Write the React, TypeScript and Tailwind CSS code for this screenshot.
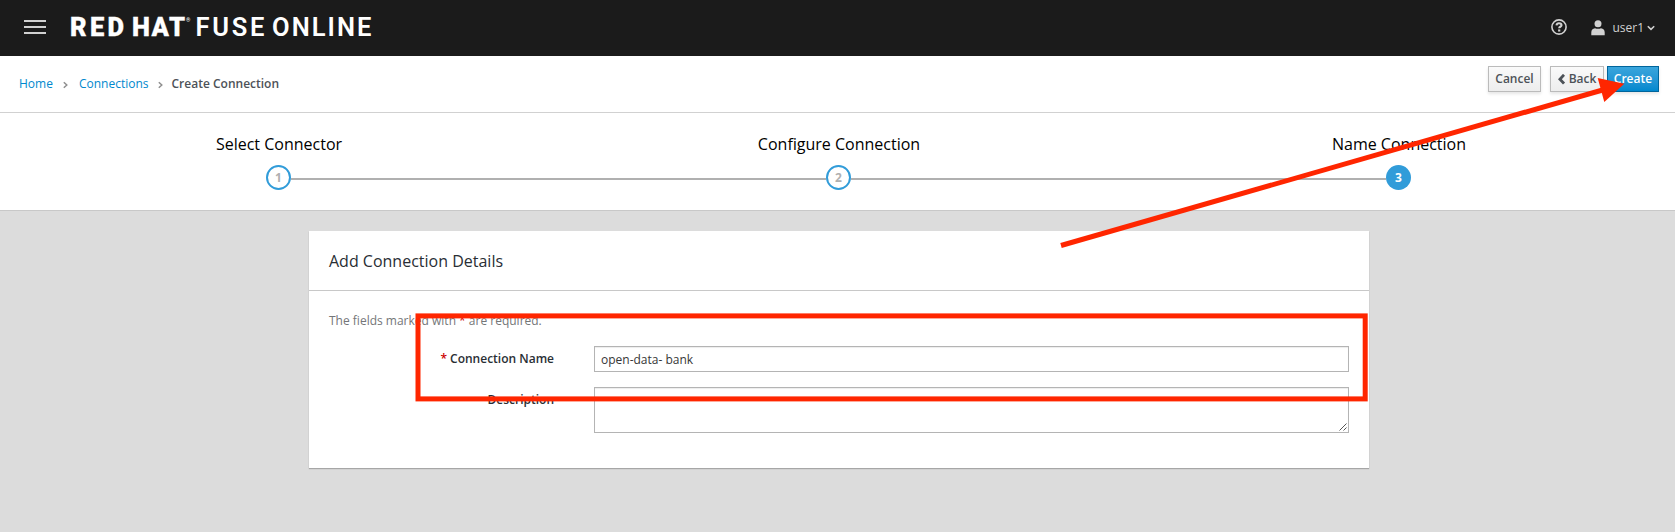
import React from 'react';

const steps = [
  { n: 1, title: 'Select Connector' },
  { n: 2, title: 'Configure Connection' },
  { n: 3, title: 'Name Connection' },
];

function Header() {
  return (
    <header className="flex h-14 items-center bg-[#1b1b1b] text-[#d1d1d1]">
      <button aria-label="Toggle navigation" className="mb-[2px] ml-6 flex w-[22px] flex-col gap-[4px]">
        <span className="h-[2px] bg-[#d1d1d1]" />
        <span className="h-[2px] bg-[#d1d1d1]" />
        <span className="h-[2px] bg-[#d1d1d1]" />
      </button>
      <svg className="ml-6" width="304" height="32" viewBox="70 12 304 32" fill="#fff" fontFamily="Roboto, sans-serif">
        <text x="70" y="35.500" fontSize="25.500" fontWeight="900" textLength="54" stroke="#fff" strokeWidth="0.3">RED</text>
        <text x="132" y="35.500" fontSize="25.500" fontWeight="900" textLength="53" stroke="#fff" strokeWidth="0.3">HAT</text>
        <text x="186" y="21.500" fontSize="5.500">®</text>
        <text x="195.500" y="35.500" fontSize="25.500" fontWeight="600" textLength="69">FUSE</text>
        <text x="272" y="35.500" fontSize="25.500" fontWeight="600" textLength="99.500">ONLINE</text>
      </svg>
      <div className="mb-[2px] ml-auto flex items-center pr-[20px]">
        <svg width="16" height="16" viewBox="0 0 16 16" fill="none" stroke="#d1d1d1">
          <circle cx="8" cy="8" r="7.100" strokeWidth="1.600" />
          <path d="M5.500 6.300C5.700 4.800 6.700 4.300 8 4.300c1.500 0 2.500.8 2.500 1.900 0 1.600-2.300 1.500-2.300 3" strokeWidth="2.100" />
          <path d="M7.100 11.500h2.200" strokeWidth="2.100" />
        </svg>
        <svg className="mt-[2px] ml-6" width="14" height="16" viewBox="0 0 14 16" fill="#d1d1d1">
          <circle cx="7" cy="3.700" r="3.500" />
          <path d="M.3 15.200v-2.700C.3 9.800 1.700 8.600 4 8.200c1.900.7 4.100.7 6 0 2.300.4 3.700 1.600 3.700 4.300v2.700z" />
        </svg>
        <span className="mt-[2px] ml-[7px] text-xs">user1</span>
        <svg className="mt-[2px] ml-[3px]" width="8" height="6" viewBox="0 0 8 6" fill="none" stroke="#d1d1d1" strokeWidth="1.600">
          <path d="M.8 1.200 4 4.300 7.200 1.200" />
        </svg>
      </div>
    </header>
  );
}

function Separator() {
  return (
    <svg width="5" height="8" viewBox="0 0 5 8" fill="none" stroke="#8f8f8f" strokeWidth="1.500" className="mt-px">
      <path d="M.8 1.200 3.800 4 .8 6.800" />
    </svg>
  );
}

function Toolbar() {
  const plain =
    'h-[26px] border border-[#bbb] bg-linear-to-b from-[#fafafa] to-[#ededed] text-[#4d5258] shadow-[0_2px_3px_rgba(3,3,3,0.1)]';
  return (
    <div className="flex h-[57px] justify-between border-b border-[#d1d1d1] bg-white text-xs">
      <nav className="flex h-14 items-center pl-[19px] text-[#0088ce]">
        <a>Home</a>
        <span className="mx-[10px]"><Separator /></span>
        <a className="ml-px">Connections</a>
        <span className="mx-[9px]"><Separator /></span>
        <span className="font-semibold text-[#4d5258]">Create Connection</span>
      </nav>
      <div className="flex pt-[10px] pr-4 font-semibold">
        <button className={plain + ' w-[53px]'}>Cancel</button>
        <button className={plain + ' ml-[9px] flex w-[54px] items-center justify-center gap-1'}>
          <svg width="7" height="11" viewBox="0 0 7 11" fill="none" stroke="#4d5258" strokeWidth="2.800">
            <path d="M6 .8 1.900 5.200 6 9.600" />
          </svg>
          Back
        </button>
        <button className="ml-[3px] h-[26px] w-[52px] border border-[#00659c] bg-linear-to-b from-[#39a5dc] to-[#0088ce] text-white shadow-[0_2px_3px_rgba(3,3,3,0.1)]">
          Create
        </button>
      </div>
    </div>
  );
}

function Wizard() {
  return (
    <ol className="flex h-[98px] justify-center overflow-hidden border-b border-[#c8c8c8] bg-white pl-[2px]">
      {steps.map((s, i) => (
        <li key={s.n} className="flex w-[560px] shrink-0 flex-col items-center pt-[19px]">
          <span className="pl-px text-base leading-6 text-black">{s.title}</span>
          <div className="mt-[9px] flex w-full items-center">
            <span className={i === 0 ? 'h-[2px] flex-1' : 'mt-[2px] h-[2px] flex-1 bg-[#b0b0b0]'} />
            <span
              className={
                i === 2
                  ? 'flex size-[25px] items-center justify-center rounded-full bg-[#319cd9] text-xs font-bold text-white'
                  : 'flex size-[25px] items-center justify-center rounded-full border-2 border-[#319cd9] text-xs font-bold text-[#b0b0b0]'
              }
            >
              {s.n}
            </span>
            <span className={i === 2 ? 'h-[2px] flex-1' : 'mt-[2px] h-[2px] flex-1 bg-[#b0b0b0]'} />
          </div>
        </li>
      ))}
    </ol>
  );
}

function DetailsCard() {
  return (
    <section className="ml-[309px] h-[237px] w-[1060px] bg-white shadow-[0_1px_1px_rgba(3,3,3,0.25)]">
      <h2 className="flex h-[60px] items-center border-b border-[#c8c8c8] pl-5 text-base text-[#292e34]">
        Add Connection Details
      </h2>
      <p className="pt-[20px] pl-5 text-xs leading-5 text-[#747678]">
        The fields marked with <span className="text-[#c00]">*</span> are required.
      </p>
      <div className="mt-[15px] flex pr-5">
        <label className="w-[245px] pt-[3px] text-right text-xs leading-5 font-semibold text-[#292e34]">
          <span className="text-[#c00]">*</span> Connection Name
        </label>
        <div className="ml-10 flex h-[26px] flex-1 items-center border border-[#b4b4b4] px-[6px] pt-[2px] text-xs text-[#363636] shadow-[inset_0_1px_1px_rgba(3,3,3,0.075)]">
          open-data- bank
        </div>
      </div>
      <div className="mt-[15px] flex pr-5">
        <label className="w-[245px] pt-[3px] text-right text-xs leading-5 font-semibold text-[#292e34]">Description</label>
        <div className="ml-10 flex h-[46px] flex-1 items-end justify-end border border-[#b4b4b4] p-px shadow-[inset_0_1px_1px_rgba(3,3,3,0.075)]">
          <svg width="8" height="8" viewBox="0 0 8 8" stroke="#444" strokeWidth="0.9">
            <path d="M.5 7.500 7.500.5M4.500 7.500l3-3" />
          </svg>
        </div>
      </div>
    </section>
  );
}

function Annotations() {
  return (
    <svg className="pointer-events-none absolute top-0 left-0" width="1675" height="532" fill="none">
      <rect x="418" y="315.900" width="947.200" height="83" stroke="#ff2600" strokeWidth="5" />
      <path d="M1061 245.500 1606 89" stroke="#ff2600" strokeWidth="5" />
      <path d="M1597.700 78 1624.300 83.700 1604.300 102z" fill="#ff2600" />
    </svg>
  );
}

export default function App() {
  return (
    <div className="relative h-[532px] w-[1675px] overflow-hidden bg-[#dcdcdc] font-['Open_Sans',sans-serif]">
      <Header />
      <Toolbar />
      <Wizard />
      <main className="pt-5">
        <DetailsCard />
      </main>
      <Annotations />
    </div>
  );
}
